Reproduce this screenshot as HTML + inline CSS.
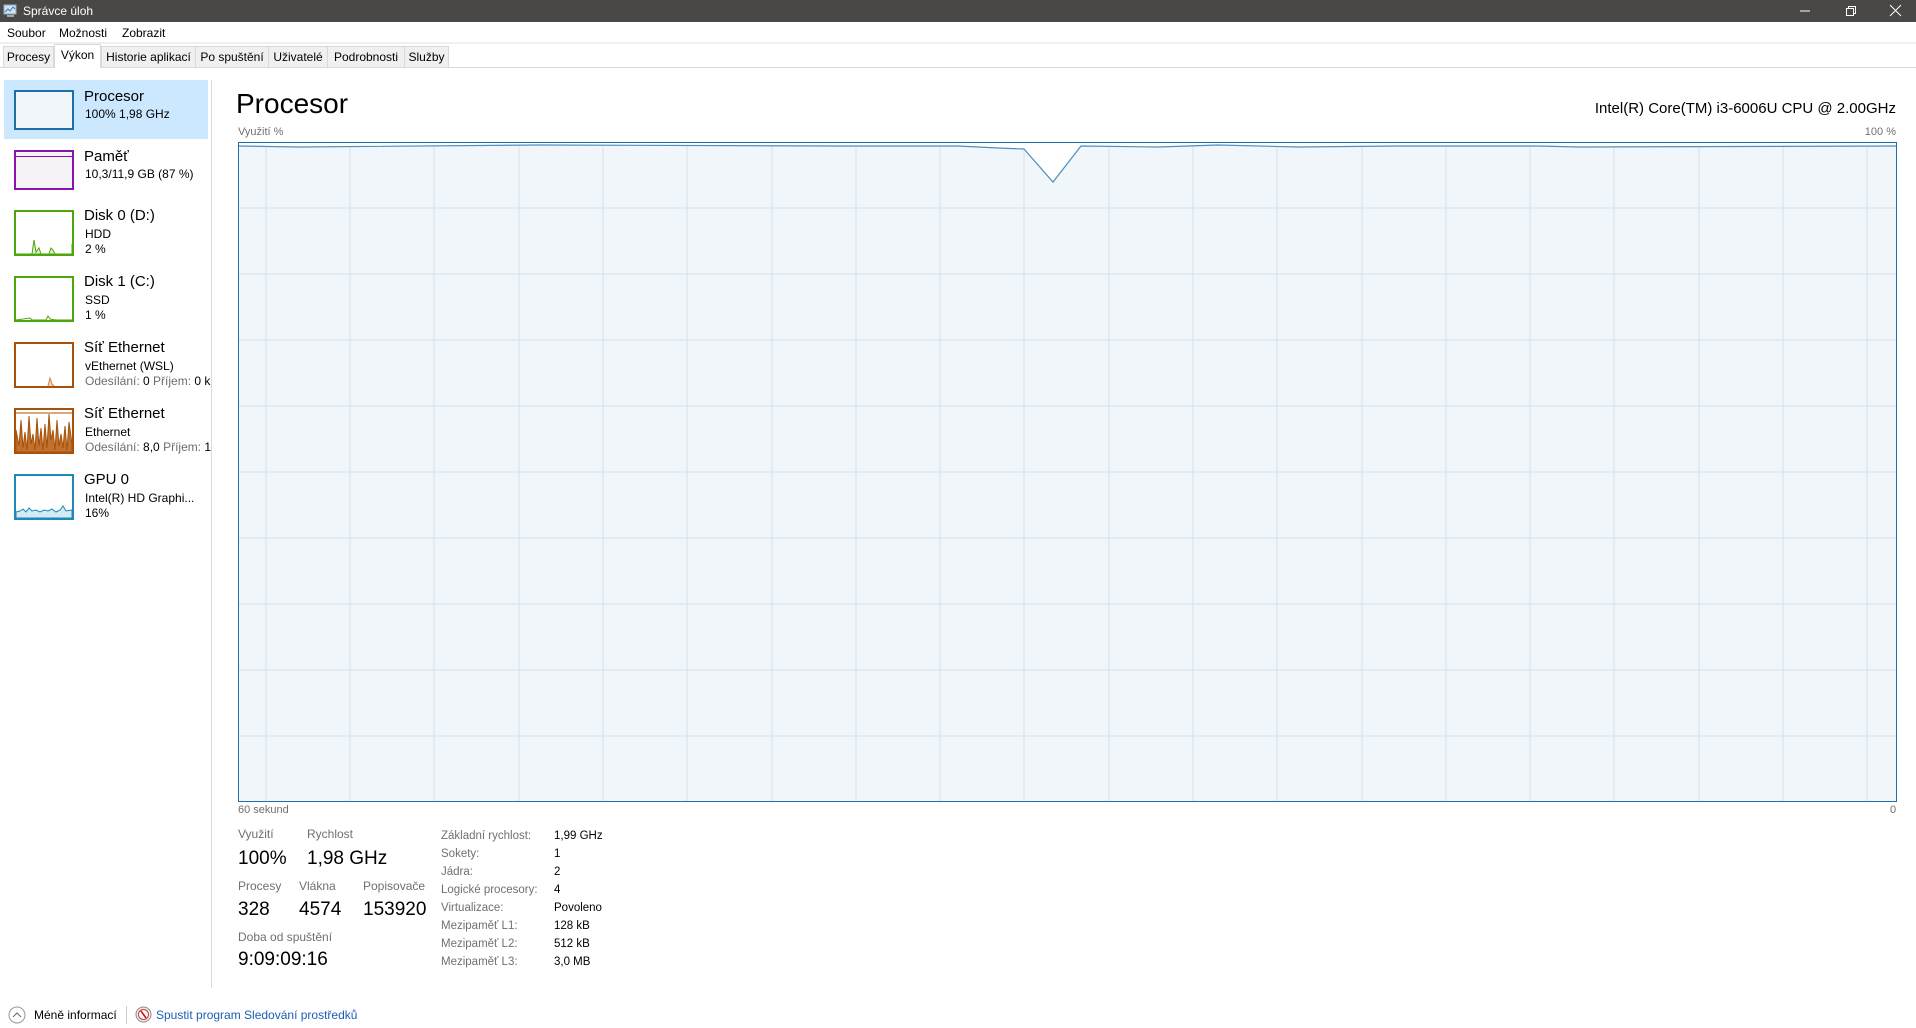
<!DOCTYPE html>
<html><head><meta charset="utf-8"><style>
*{margin:0;padding:0;box-sizing:border-box}
body{width:1916px;height:1028px;background:#fff;font-family:"Liberation Sans",sans-serif;color:#000;position:relative;overflow:hidden}
.a{position:absolute;white-space:nowrap}
.tb{left:0;top:0;width:1916px;height:22px;background:#4a4846;color:#fff;font-size:12px}
.tab{position:absolute;top:46px;height:22px;background:#f0f0f0;border:1px solid #d9d9d9;font-size:12px;line-height:20px;text-align:center}
.g{color:#6d6d6d}
.th{position:absolute;left:14px;width:60px;border:2px solid}
.t1{font-size:15px}
.t2{font-size:12px}
.lb{font-size:12px;color:#707070}
.v{font-size:19px}
</style></head><body>
<div class="a tb">
 <svg class="a" style="left:3px;top:3px" width="15" height="15"><rect x="1" y="2" width="12" height="9" fill="#cfe3f2" stroke="#9ab"/><path d="M2 9l3-3 2 2 3-4 2 2" stroke="#3a7fc0" fill="none"/><rect x="4" y="12" width="7" height="2" fill="#aaa"/></svg>
 <span class="a" style="left:23px;top:4px">Správce úloh</span>
 <svg class="a" style="left:1796px;top:4px" width="110" height="14"><path d="M4 7h10" stroke="#fff"/><rect x="50.5" y="4.5" width="7" height="7" fill="none" stroke="#fff"/><path d="M52.5 4.5v-2h7v7h-2" fill="none" stroke="#fff"/><path d="M94 1l11 11M105 1l-11 11" stroke="#fff"/></svg>
</div>
<div class="a" style="left:0;top:22px;width:1916px;height:20px;font-size:12px">
 <span class="a" style="left:7px;top:4px">Soubor</span><span class="a" style="left:59px;top:4px">Možnosti</span><span class="a" style="left:122px;top:4px">Zobrazit</span>
</div>
<div class="a" style="left:0;top:42px;width:1916px;height:2px;background:#f0f0f0"></div>
<div class="a" style="left:0;top:67px;width:1916px;height:1px;background:#d9d9d9"></div>
<div class="tab" style="left:3px;width:51px">Procesy</div>
<div class="tab" style="left:54px;width:47px;top:44px;height:24px;background:#fff;border-bottom:none">Výkon</div>
<div class="tab" style="left:101px;width:95px">Historie aplikací</div>
<div class="tab" style="left:195px;width:74px">Po spuštění</div>
<div class="tab" style="left:268px;width:60px">Uživatelé</div>
<div class="tab" style="left:327px;width:78px">Podrobnosti</div>
<div class="tab" style="left:404px;width:45px">Služby</div>

<div class="a" style="left:4px;top:80px;width:204px;height:59px;background:#cce8ff"></div>
<div class="a" style="left:211px;top:80px;width:1px;height:908px;background:#dadada"></div>

<div class="th" style="top:90px;height:40px;border-color:#1e6fa8;background:#f1f6fa"></div>
<div class="a t1" style="left:84px;top:88px">Procesor</div><div class="a t2" style="left:85px;top:107px">100% 1,98 GHz</div>

<div class="th" style="top:150px;height:40px;border-color:#8b12ae;background:#f4f2f4"><div style="margin-top:4px;height:1px;background:#8b12ae"></div></div>
<div class="a t1" style="left:84px;top:148px">Paměť</div><div class="a t2" style="left:85px;top:167px">10,3/11,9 GB (87 %)</div>

<div class="th" style="top:210px;height:46px;border-color:#4da60c"><svg width="56" height="42" style="display:block"><path d="M0 42L16 42 18 28 20 40 23 36 25 42 33 42 35 36 37 38 39 42 56 42 56 32 56 42Z" fill="#dff0cf" stroke="#4da60c"/></svg></div>
<div class="a t1" style="left:84px;top:207px">Disk 0 (D:)</div><div class="a t2" style="left:85px;top:227px">HDD</div><div class="a t2" style="left:85px;top:242px">2 %</div>

<div class="th" style="top:276px;height:46px;border-color:#4da60c"><svg width="56" height="42" style="display:block"><path d="M0 42L14 40 16 42 30 42 32 38 34 41 40 42 56 42" fill="none" stroke="#4da60c"/></svg></div>
<div class="a t1" style="left:84px;top:273px">Disk 1 (C:)</div><div class="a t2" style="left:85px;top:293px">SSD</div><div class="a t2" style="left:85px;top:308px">1 %</div>

<div class="th" style="top:342px;height:46px;border-color:#a75208"><svg width="56" height="42" style="display:block"><path d="M32 42L34 34 36 40 38 42" fill="#f5d6c0" stroke="#d08050"/></svg></div>
<div class="a t1" style="left:84px;top:339px">Síť Ethernet</div><div class="a t2" style="left:85px;top:359px">vEthernet (WSL)</div><div class="a t2" style="left:85px;top:374px;width:126px;overflow:hidden"><span class="g">Odesílání:</span> 0 <span class="g">Příjem:</span> 0 kb</div>

<div class="th" style="top:408px;height:46px;border-color:#a75208"><svg width="56" height="42" style="display:block"><path d="M0 42L0 20 3 36 5 10 7 38 9 22 11 40 13 6 15 34 17 24 19 40 21 8 23 36 25 18 27 40 29 14 31 38 33 4 35 30 37 20 39 40 41 10 43 36 45 24 47 38 49 16 51 40 53 12 56 34 56 42Z" fill="#c07030" stroke="#a75208"/><path d="M0 3h56" stroke="#a75208"/></svg></div>
<div class="a t1" style="left:84px;top:405px">Síť Ethernet</div><div class="a t2" style="left:85px;top:425px">Ethernet</div><div class="a t2" style="left:85px;top:440px;width:126px;overflow:hidden"><span class="g">Odesílání:</span> 8,0 <span class="g">Příjem:</span> 17</div>

<div class="th" style="top:474px;height:46px;border-color:#1e88b8"><svg width="56" height="42" style="display:block"><path d="M0 42L0 36 4 35 7 33 10 36 13 32 16 35 20 34 24 36 28 34 32 35 36 33 40 36 44 34 47 30 50 35 56 34 56 42Z" fill="#d4ebf5" stroke="#1e88b8"/></svg></div>
<div class="a t1" style="left:84px;top:471px">GPU 0</div><div class="a t2" style="left:85px;top:491px">Intel(R) HD Graphi...</div><div class="a t2" style="left:85px;top:506px">16%</div>

<div class="a" style="left:236px;top:88px;font-size:28px">Procesor</div>
<div class="a" style="right:20px;top:100px;font-size:15px">Intel(R) Core(TM) i3-6006U CPU @ 2.00GHz</div>
<div class="a lb" style="left:238px;top:126px;font-size:11px">Využití %</div>
<div class="a lb" style="right:20px;top:126px;font-size:11px">100 %</div>

<svg class="a" style="left:238px;top:142px" width="1659" height="660">
 <rect x="0.5" y="0.5" width="1658" height="659" fill="#f1f6fa" stroke="#1e6fa8"/>
 <g stroke="#d4e3ef">
  <path d="M28 1V659M112 1V659M196 1V659M281 1V659M365 1V659M449 1V659M534 1V659M618 1V659M702 1V659M786 1V659M871 1V659M955 1V659M1039 1V659M1124 1V659M1208 1V659M1292 1V659M1376 1V659M1461 1V659M1545 1V659M1629 1V659"/>
  <path d="M1 66H1658M1 132H1658M1 198H1658M1 264H1658M1 330H1658M1 396H1658M1 462H1658M1 528H1658M1 594H1658"/>
 </g>
 <path d="M1 1H1658V4L1340 5 1300 4 1160 4 1060 5 980 3 920 5 843 4 815 40 786 7 760 6 720 4 600 4 300 3 60 5 1 4Z" fill="#fff"/>
 <path d="M1 4L60 5 300 3 600 4 720 4 760 6 786 7 815 40 843 4 920 5 980 3 1060 5 1160 4 1300 4 1340 5 1658 4" fill="none" stroke="#4d8fbe" stroke-width="1.2"/>
</svg>
<div class="a lb" style="left:238px;top:804px;font-size:11px">60 sekund</div>
<div class="a lb" style="left:1890px;top:804px;font-size:11px">0</div>

<div class="a lb" style="left:238px;top:827px">Využití</div><div class="a lb" style="left:307px;top:827px">Rychlost</div>
<div class="a v" style="left:238px;top:848px">100%</div><div class="a v" style="left:307px;top:848px">1,98 GHz</div>
<div class="a lb" style="left:238px;top:879px">Procesy</div><div class="a lb" style="left:299px;top:879px">Vlákna</div><div class="a lb" style="left:363px;top:879px">Popisovače</div>
<div class="a v" style="left:238px;top:899px">328</div><div class="a v" style="left:299px;top:899px">4574</div><div class="a v" style="left:363px;top:899px">153920</div>
<div class="a lb" style="left:238px;top:930px">Doba od spuštění</div>
<div class="a v" style="left:238px;top:949px">9:09:09:16</div>

<div class="a lb" style="left:441px;top:827px;line-height:18px;font-size:11.5px">Základní rychlost:<br>Sokety:<br>Jádra:<br>Logické procesory:<br>Virtualizace:<br>Mezipaměť L1:<br>Mezipaměť L2:<br>Mezipaměť L3:</div>
<div class="a" style="left:554px;top:827px;line-height:18px;font-size:11.5px">1,99 GHz<br>1<br>2<br>4<br>Povoleno<br>128 kB<br>512 kB<br>3,0 MB</div>

<svg class="a" style="left:8px;top:1006px" width="18" height="18"><circle cx="9" cy="9" r="8" fill="none" stroke="#999"/><path d="M5 11l4-4 4 4" fill="none" stroke="#666"/></svg>
<div class="a" style="left:34px;top:1008px;font-size:12px">Méně informací</div>
<div class="a" style="left:126px;top:1006px;width:1px;height:18px;background:#ccc"></div>
<svg class="a" style="left:135px;top:1006px" width="17" height="17"><circle cx="8.5" cy="8.5" r="7.5" fill="#eee" stroke="#888"/><circle cx="8.5" cy="8.5" r="5" fill="#fff" stroke="#c33"/><path d="M6 5l5 7" stroke="#c00" stroke-width="1.5"/></svg>
<div class="a" style="left:156px;top:1008px;font-size:12px;color:#1a5fb4">Spustit program Sledování prostředků</div>
</body></html>
